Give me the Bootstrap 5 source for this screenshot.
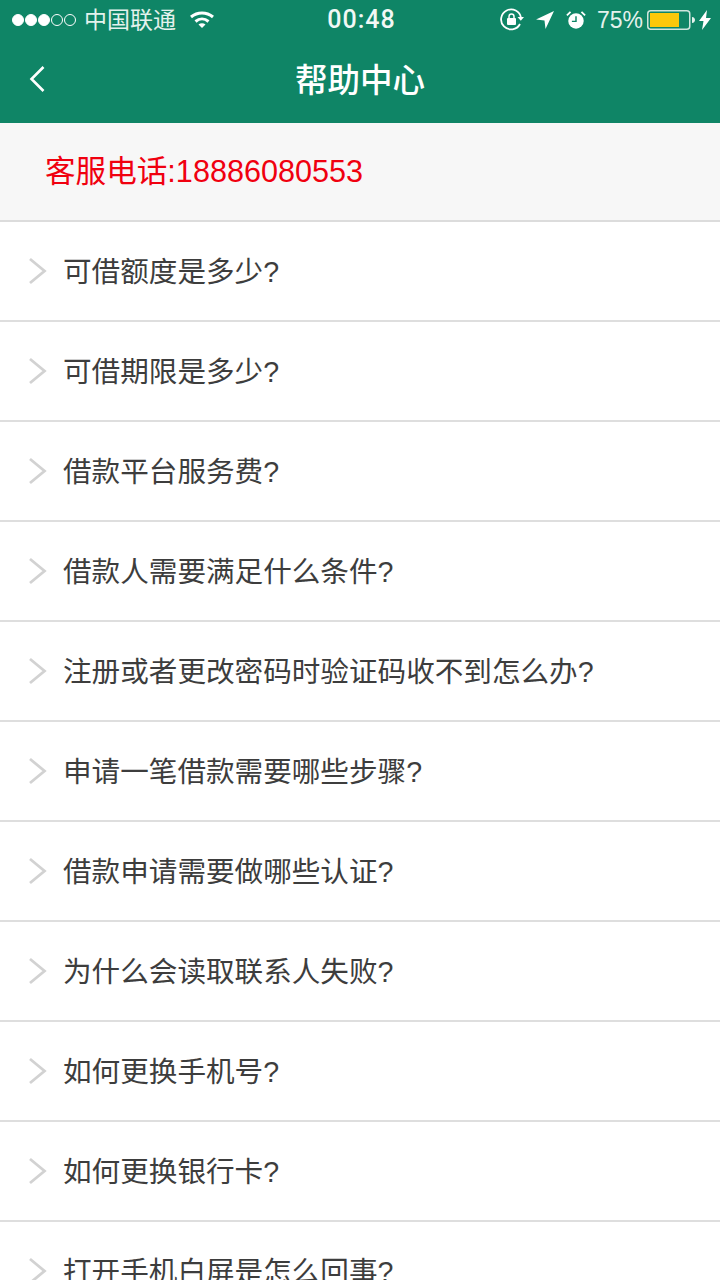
<!DOCTYPE html>
<html lang="zh-CN">
<head>
    <meta charset="UTF-8">
    <meta name="viewport" content="width=device-width, initial-scale=1.0">
    <title>帮助中心</title>
    <link href="https://cdn.jsdelivr.net/npm/bootstrap@5.3.0/dist/css/bootstrap.min.css" rel="stylesheet">
    <style>
        html, body { height: 100%; overflow: hidden; }
        body { font-family: "Liberation Sans", "Noto Sans CJK SC", sans-serif; background: #fff; }
        .app-head { background: #0f8566; color: #fff; height: 123px; }
        .status-line { height: 40px; padding: 0 9px 0 12px; font-size: 23px; color: #e4f2ed; }
        .status-side { width: 260px; }
        .status-gap { margin-left: 11px; }
        .dots { gap: 1px; margin-right: 8px; }
        .dot { width: 12px; height: 12px; border-radius: 50%; border: 1px solid #fff; }
        .dot-on { background: #fff; }
        .wifi-icon { margin-left: 13px; }
        .clock { font-family: Roboto, sans-serif; font-size: 25px; font-weight: 500; letter-spacing: 1px; color: #f1f8f5; }
        .title-line { height: 83px; }
        .back-btn { left: 29px; top: 50%; margin-top: -17px; line-height: 0; }
        .page-title { font-size: 32.5px; font-weight: 500; }
        .phone-strip { height: 99px; background: #f7f7f7; padding-left: 45px; color: #f0000f; font-size: 30.6px; border-bottom: 2px solid #dcdcdc; }
        .faq-list { --bs-list-group-border-color: #dedede; --bs-list-group-border-radius: 0; }
        .faq-row { height: 100px; padding: 2px 0 0 28px; font-size: 28.6px; color: #3d3d3d; gap: 16px; border-bottom-width: 2px !important; }
        .faq-arrow { margin-top: -2px; }
    </style>
</head>
<body>
    <div class="app-head">
        <div class="status-line d-flex align-items-center justify-content-between">
            <div class="status-side d-flex align-items-center">
                <div class="dots d-flex">
                    <span class="dot dot-on"></span><span class="dot dot-on"></span><span class="dot dot-on"></span><span class="dot"></span><span class="dot"></span>
                </div>
                <span>中国联通</span>
                <svg class="wifi-icon" width="26" height="20" viewBox="0 0 26 20" fill="none" stroke="#fff" stroke-width="3">
                    <path d="M2 7c6.500-5.500 15.500-5.500 22 0"/>
                    <path d="M6.500 11.500c4-3.300 9-3.300 13 0"/>
                    <path d="M13 18l-3.500-3.500c2-1.600 5-1.600 7 0z" fill="#fff" stroke="none"/>
                </svg>
            </div>
            <span class="clock">00:48</span>
            <div class="status-side d-flex align-items-center justify-content-end">
                <svg width="24" height="24" viewBox="0 0 24 24" fill="none" stroke="#fff" stroke-width="1.800">
                    <path d="M20 16a10 10 0 1 1 1-6"/>
                    <path d="M17.500 9h6.500l-3.200 3.800z" fill="#fff" stroke="none"/>
                    <rect x="7" y="10" width="9" height="7" rx="1" fill="#fff" stroke="none"/>
                    <path d="M9 10V8.500a2.500 2.500 0 0 1 5 0V10" stroke-width="1.500"/>
                </svg>
                <svg class="status-gap" width="20" height="20" viewBox="0 0 20 20"><path d="M19 1L1 9.500l8.500 1 1 8.500z" fill="#fff"/></svg>
                <svg class="status-gap" width="20" height="20" viewBox="0 0 22 22" fill="#fff">
                    <circle cx="11" cy="12" r="8.500"/>
                    <path d="M11 7v5.500H6.500" fill="none" stroke="#0f8566" stroke-width="1.600"/>
                    <path d="M1 6l4-4M21 6l-4-4" stroke="#fff" stroke-width="2"/>
                </svg>
                <span class="status-gap">75%</span>
                <svg class="ms-1" width="48" height="20" viewBox="0 0 48 20">
                    <rect x=".75" y=".75" width="42" height="18.500" rx="3" fill="none" stroke="#cfe5dd" stroke-width="1.500"/>
                    <rect x="3" y="3" width="29" height="14" fill="#fdc80a"/>
                    <path d="M45 7c2 0 3 1.500 3 3s-1 3-3 3z" fill="#e4f2ed"/>
                </svg>
                <svg class="ms-1" width="12" height="20" viewBox="0 0 12 20"><path d="M8 0L0 11h4.500L3 20l9-12H7z" fill="#fff"/></svg>
            </div>
        </div>
        <div class="title-line position-relative d-flex align-items-center justify-content-center">
            <a class="back-btn position-absolute" href="#" aria-label="返回">
                <svg width="16" height="28" viewBox="0 0 16 28" fill="none" stroke="#fff" stroke-width="2.600"><path d="M14.500 2L2.500 14l12 12"/></svg>
            </a>
            <span class="page-title">帮助中心</span>
        </div>
    </div>

    <div class="phone-strip d-flex align-items-center">客服电话:18886080553</div>

    <div id="faqList" class="faq-list list-group list-group-flush"></div>

    <script>
        const questions = [
            "可借额度是多少?",
            "可借期限是多少?",
            "借款平台服务费?",
            "借款人需要满足什么条件?",
            "注册或者更改密码时验证码收不到怎么办?",
            "申请一笔借款需要哪些步骤?",
            "借款申请需要做哪些认证?",
            "为什么会读取联系人失败?",
            "如何更换手机号?",
            "如何更换银行卡?",
            "打开手机白屏是怎么回事?"
        ];
        const arrow = '<svg class="faq-arrow" width="19" height="28" viewBox="0 0 19 28" fill="none" stroke="#d2d2d2" stroke-width="2.800"><path d="M2 2l14.500 12L2 26"/></svg>';
        document.getElementById("faqList").innerHTML = questions.map(q =>
            `<a href="#" class="faq-row list-group-item list-group-item-action d-flex align-items-center">${arrow}<span>${q}</span></a>`
        ).join("");
    </script>
    <script src="https://cdn.jsdelivr.net/npm/bootstrap@5.3.0/dist/js/bootstrap.bundle.min.js"></script>
</body>
</html>
